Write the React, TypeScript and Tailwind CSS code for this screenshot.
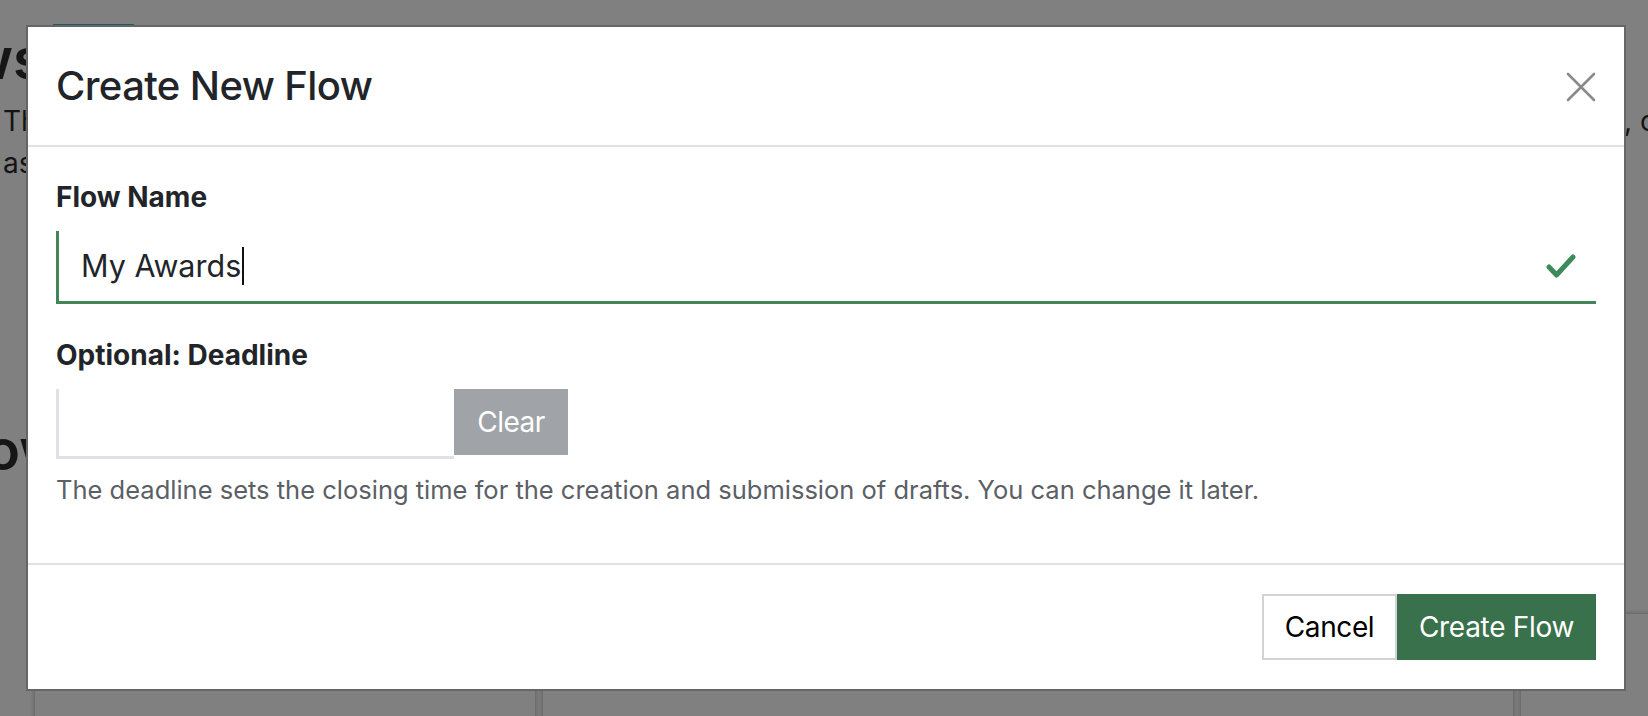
import React from "react";

export default function App() {
  return (
    <div className="relative w-[1648px] h-[716px] overflow-hidden bg-[#808080] font-['Inter','Liberation_Sans',sans-serif]">
      {/* Background page (dimmed) */}
      <div className="pt-[24px]">
        <div className="ml-[53px] w-[81px] h-[2px] bg-[#1f5b5c]" />
        <div className="ml-[-34px] text-[56px] leading-[67px] font-semibold text-[#161616] whitespace-nowrap">
          ws
        </div>
        <div className="mt-[7px] text-[28px] leading-[42px] text-[#141414]">
          <div className="flex justify-between whitespace-nowrap">
            <span className="pl-[3px]">The flows below are shared with your team</span>
            <span className="mr-[-8px]">, c</span>
          </div>
          <div className="pl-[3px] whitespace-nowrap">as needed.</div>
        </div>
        <div className="mt-[233px] ml-[-14px] text-[56px] leading-[67px] font-semibold text-[#161616] whitespace-nowrap">
          ow
        </div>
        <div className="mt-[130px] ml-[35px] flex gap-[8px]">
          <div className="shrink-0 w-[500px] h-[200px] bg-[#808080] shadow-[0_0_5px_rgba(0,0,0,0.35)]" />
          <div className="shrink-0 w-[970px] h-[200px] bg-[#808080] shadow-[0_0_5px_rgba(0,0,0,0.35)]" />
          <div className="shrink-0 w-[300px] h-[200px] bg-[#808080] shadow-[0_0_5px_rgba(0,0,0,0.35)]" />
        </div>
      </div>

      {/* Modal */}
      <div className="absolute left-[26px] top-[25px] w-[1600px] border-2 border-[#666666] bg-white">
        {/* Header */}
        <div className="h-[120px] px-[28px] flex items-center justify-between border-b-2 border-[#dee2e6]">
          <h2 className="text-[40px] leading-[48px] font-medium text-[#212529] tracking-[-0.6px]">
            Create New Flow
          </h2>
          <svg width="30" height="30" viewBox="0 0 30 30" className="mt-[2px]">
            <path d="M2 2 L28 28 M28 2 L2 28" stroke="#8a8a8a" strokeWidth="2.6" strokeLinecap="round" />
          </svg>
        </div>

        {/* Body */}
        <div className="px-[28px] pt-[29px] pb-[55px]">
          <div className="text-[28px] leading-[42px] font-bold text-[#212529]">Flow Name</div>
          <div className="mt-[13px] h-[73px] border-l-[3px] border-b-[3px] border-[#418558] flex items-center justify-between pl-[22px] pr-[19px]">
            <div className="flex items-center">
              <span className="text-[30.5px] text-[#212529]">My Awards</span>
              <span className="ml-[1px] w-[2px] h-[38px] bg-[#111]" />
            </div>
            <svg width="32" height="28" viewBox="0 0 32 28">
              <path d="M4 15 L11.5 23 L28 5" fill="none" stroke="#3d8a5a" strokeWidth="5" strokeLinecap="round" strokeLinejoin="round" />
            </svg>
          </div>

          <div className="mt-[30px] text-[28px] leading-[42px] font-bold text-[#212529]">Optional: Deadline</div>
          <div className="mt-[13px] flex items-start">
            <div className="w-[398px] h-[70px] border-l-[3px] border-b-[3px] border-[#dee2e6]" />
            <button className="w-[114px] h-[66px] bg-[#a0a3a7] text-white text-[28px] tracking-[-0.5px]">Clear</button>
          </div>
          <div className="mt-[13px] text-[25.5px] leading-[36px] text-[#5b6066]">
            The deadline sets the closing time for the creation and submission of drafts. You can change it later.
          </div>
        </div>

        {/* Footer */}
        <div className="h-[126px] px-[28px] flex items-center justify-end border-t-2 border-[#dee2e6]">
          <button className="w-[135px] h-[66px] border-2 border-[#d3d3d3] bg-white text-black text-[28px] tracking-[-0.4px]">Cancel</button>
          <button className="w-[199px] h-[66px] bg-[#38714b] text-white text-[28px] tracking-[-0.3px]">Create Flow</button>
        </div>
      </div>
    </div>
  );
}
